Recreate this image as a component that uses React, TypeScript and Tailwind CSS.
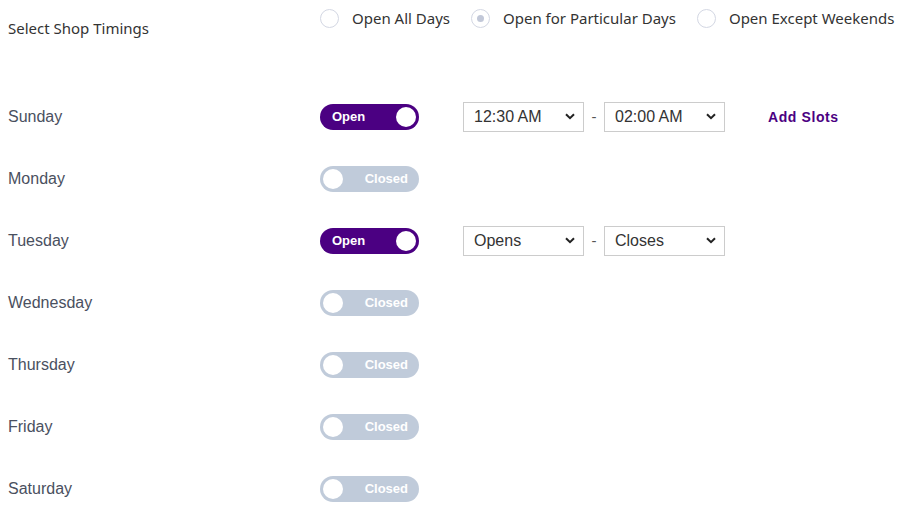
import { useState } from "react";

const DAYS = [
  { name: "Sunday", open: true, from: "12:30 AM", to: "02:00 AM", slots: true },
  { name: "Monday", open: false },
  { name: "Tuesday", open: true, from: "Opens", to: "Closes" },
  { name: "Wednesday", open: false },
  { name: "Thursday", open: false },
  { name: "Friday", open: false },
  { name: "Saturday", open: false },
];

const MODES = ["Open All Days", "Open for Particular Days", "Open Except Weekends"];

function Toggle({ open }: { open: boolean }) {
  if (open) {
    return (
      <div className="flex h-[26px] w-[99px] items-center justify-between rounded-full bg-[#4b0082] pl-3 pr-[3px]">
        <span className="text-[13px] font-bold text-white">Open</span>
        <span className="h-[20px] w-[20px] rounded-full bg-white" />
      </div>
    );
  }
  return (
    <div className="flex h-[26px] w-[99px] items-center justify-between rounded-full bg-[#c0cbda] pl-[3px] pr-[11px]">
      <span className="h-[20px] w-[20px] rounded-full bg-white" />
      <span className="text-[13px] font-bold text-white">Closed</span>
    </div>
  );
}

function TimeSelect({ value }: { value: string }) {
  return (
    <div className="relative h-[30px] w-[121px]">
      <select
        defaultValue={value}
        className="h-full w-full appearance-none rounded-none border border-[#cccccc] bg-white pl-[10px] text-[16px] text-[#333] outline-none"
      >
        <option>{value}</option>
      </select>
      <svg
        className="pointer-events-none absolute right-[9px] top-[11px]"
        width="10"
        height="7"
        viewBox="0 0 10 7"
      >
        <path d="M1 1.2 L5 5.2 L9 1.2" fill="none" stroke="#222" strokeWidth="2" />
      </svg>
    </div>
  );
}

export default function App() {
  const [mode, setMode] = useState(1);

  return (
    <div
      className="h-[514px] w-[904px] bg-white px-2"
      style={{ fontFamily: '"Liberation Sans", Arial, sans-serif' }}
    >
      <div className="flex h-[86px] items-start" style={{ fontFamily: '"Noto Sans", sans-serif' }}>
        <div className="w-[312px] pt-[17px] text-[15px] text-[#333]">Select Shop Timings</div>
        <div className="flex gap-[21px] pt-[7px]">
          {MODES.map((m, i) => (
            <label key={m} className="flex cursor-pointer items-center" onClick={() => setMode(i)}>
              <span className="flex h-[19px] w-[19px] items-center justify-center rounded-full border border-[#d3d7e3]">
                {mode === i && <span className="h-[7px] w-[7px] rounded-full bg-[#c2c8d8]" />}
              </span>
              <span className="ml-[13px] text-[15px] text-[#333]">{m}</span>
            </label>
          ))}
        </div>
      </div>

      {DAYS.map((d) => (
        <div key={d.name} className="flex h-[62px] items-center">
          <div className="w-[312px] text-[16px] text-[#4a5060]">{d.name}</div>
          <Toggle open={d.open} />
          {d.open && (
            <div className="ml-[44px] flex items-center">
              <TimeSelect value={d.from!} />
              <span className="w-[20px] text-center text-[15px] text-[#555]">-</span>
              <TimeSelect value={d.to!} />
              {d.slots && (
                <span className="ml-[43px] text-[14px] font-bold tracking-[0.6px] text-[#4b0082]">
                  Add Slots
                </span>
              )}
            </div>
          )}
        </div>
      ))}
    </div>
  );
}
